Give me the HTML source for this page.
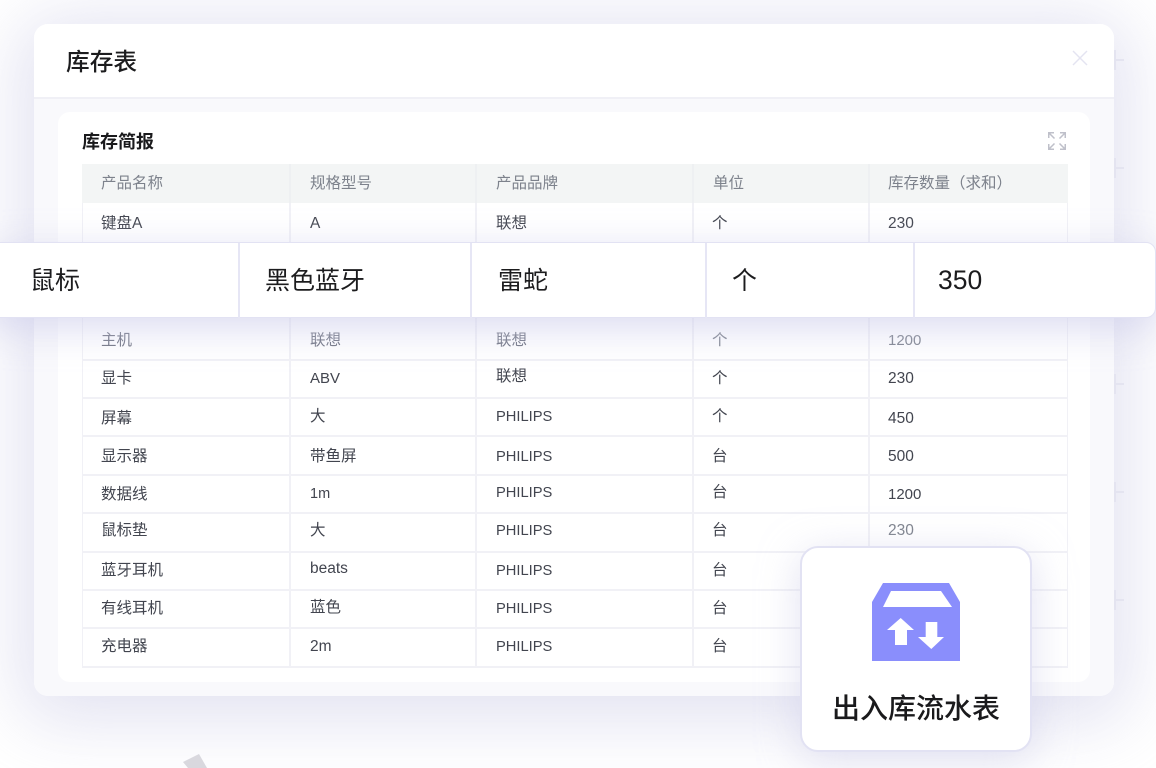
<!DOCTYPE html>
<html lang="zh"><head><meta charset="utf-8"><title>库存表</title>
<style>
html,body{margin:0;padding:0;width:1156px;height:768px;overflow:hidden;background:#fff}
body{position:relative;font-family:"Liberation Sans","Noto Sans CJK SC",sans-serif;color:#3c3f4a}
div,span.a{position:absolute}
.t{font-size:15.500px;line-height:20px;white-space:nowrap;color:#42454f;margin-top:1px}
.p{font-size:14.700px}
.h{color:#7d828c}
.hl{background:#f1f1f6;height:2px;left:82px;width:986px}
.vl{background:#f1f1f6;width:2px;top:203px;height:464px}
.f{font-size:25px;line-height:34px;top:264px;color:#1c1c1e;white-space:nowrap}
.fv{position:absolute;top:243px;width:1.500px;height:75px;background:#e6e6f5}
.tick{width:2px;height:20px;background:#e4e4f0;left:1114px}
.tick2{width:10px;height:2px;background:#e4e4f0;left:1114px}
</style></head><body>
<div style="left:34px;top:24px;width:1080px;height:672px;border-radius:14px;box-shadow:0 10px 70px 14px rgba(208,208,232,.62)"></div>
<div style="left:34px;top:24px;width:1080px;height:672px;border-radius:14px;background:#f9f9fc;overflow:hidden">
  <div style="left:0;top:0;width:1080px;height:73px;background:#fff;border-bottom:2px solid #f0f0f6"></div>
</div>
<div style="left:66px;top:46px;font-size:23.700px;line-height:34px;font-weight:500;color:#1c1c1e;white-space:nowrap">库存表</div>
<svg style="position:absolute;left:1071px;top:49px" width="18" height="18" viewBox="0 0 18 18"><path d="M2 2L16 16M16 2L2 16" stroke="#e4e4f1" stroke-width="1.500" fill="none"/></svg>

<div style="left:58px;top:112px;width:1032px;height:570px;background:#fff;border-radius:12px"></div>
<div style="left:82px;top:130px;font-size:18px;line-height:24px;font-weight:700;color:#1a1a1c;white-space:nowrap">库存简报</div>
<svg style="position:absolute;left:1047px;top:131px" width="20" height="20" viewBox="0 0 20 20" fill="none" stroke="#bfc0ca" stroke-width="1.500"><path d="M1.750 7V1.750H7M1.750 1.750L7.500 7.500"/><path d="M18.250 7V1.750H13M18.250 1.750L12.500 7.500"/><path d="M1.750 13V18.250H7M1.750 18.250L7.500 12.500"/><path d="M18.250 13V18.250H13M18.250 18.250L12.500 12.500"/></svg>

<div style="left:82px;top:164px;width:986px;height:39px;background:#f3f5f5"></div>
<div style="left:289px;top:164px;width:2px;height:39px;background:#eef0f2"></div>
<div style="left:475px;top:164px;width:2px;height:39px;background:#eef0f2"></div>
<div style="left:692px;top:164px;width:2px;height:39px;background:#eef0f2"></div>
<div style="left:868px;top:164px;width:2px;height:39px;background:#eef0f2"></div>

<div class="vl" style="left:82px;width:1px"></div><div class="vl" style="left:289px"></div><div class="vl" style="left:475px"></div><div class="vl" style="left:692px"></div><div class="vl" style="left:868px"></div><div class="vl" style="left:1067px;width:1px"></div>
<div class="hl" style="top:359px"></div><div class="hl" style="top:397px"></div><div class="hl" style="top:435px"></div><div class="hl" style="top:474px"></div><div class="hl" style="top:512px"></div><div class="hl" style="top:551px"></div><div class="hl" style="top:589px"></div><div class="hl" style="top:627px"></div><div class="hl" style="top:666px"></div>

<div class="t h" style="left:101px;top:173px">产品名称</div><div class="t h" style="left:310px;top:173px">规格型号</div><div class="t h" style="left:496px;top:173px">产品品牌</div><div class="t h" style="left:713px;top:173px">单位</div><div class="t h" style="left:888px;top:173px">库存数量（求和）</div>
<div class="t" style="left:101px;top:213px">键盘A</div><div class="t" style="left:310px;top:213px">A</div><div class="t" style="left:496px;top:213px">联想</div><div class="t" style="left:712px;top:213px">个</div><div class="t" style="left:888px;top:213px">230</div>

<div class="t h" style="left:101px;top:330px;color:#6f7380">主机</div><div class="t h" style="left:310px;top:330px;color:#6f7380">联想</div><div class="t h" style="left:496px;top:330px;color:#6f7380">联想</div><div class="t h" style="left:712px;top:330px;color:#7d828c">个</div><div class="t h" style="left:888px;top:330px;font-size:15px">1200</div>
<div class="t" style="left:101px;top:368px">显卡</div><div class="t" style="left:310px;top:368px;font-size:15px">ABV</div><div class="t" style="left:496px;top:366px">联想</div><div class="t" style="left:712px;top:368px">个</div><div class="t" style="left:888px;top:368px">230</div>
<div class="t" style="left:101px;top:408px">屏幕</div><div class="t" style="left:310px;top:406px">大</div><div class="t p" style="left:496px;top:406px">PHILIPS</div><div class="t" style="left:712px;top:406px">个</div><div class="t" style="left:888px;top:408px">450</div>
<div class="t" style="left:101px;top:446px">显示器</div><div class="t" style="left:310px;top:446px">带鱼屏</div><div class="t p" style="left:496px;top:446px">PHILIPS</div><div class="t" style="left:712px;top:446px">台</div><div class="t" style="left:888px;top:446px">500</div>
<div class="t" style="left:101px;top:484px">数据线</div><div class="t" style="left:310px;top:483px;font-size:14.500px">1m</div><div class="t p" style="left:496px;top:482px">PHILIPS</div><div class="t" style="left:712px;top:482px">台</div><div class="t" style="left:888px;top:484px;font-size:15px">1200</div>
<div class="t" style="left:101px;top:520px">鼠标垫</div><div class="t" style="left:310px;top:520px">大</div><div class="t p" style="left:496px;top:520px">PHILIPS</div><div class="t" style="left:712px;top:520px">台</div><div class="t h" style="left:888px;top:520px">230</div>
<div class="t" style="left:101px;top:560px">蓝牙耳机</div><div class="t" style="left:310px;top:558px">beats</div><div class="t p" style="left:496px;top:560px">PHILIPS</div><div class="t" style="left:712px;top:560px">台</div>
<div class="t" style="left:101px;top:598px">有线耳机</div><div class="t" style="left:310px;top:597px">蓝色</div><div class="t p" style="left:496px;top:598px">PHILIPS</div><div class="t" style="left:712px;top:598px">台</div>
<div class="t" style="left:101px;top:636px">充电器</div><div class="t" style="left:310px;top:636px">2m</div><div class="t p" style="left:496px;top:636px">PHILIPS</div><div class="t" style="left:712px;top:636px">台</div>

<div class="tick" style="top:50px"></div><div class="tick2" style="top:59px"></div>
<div class="tick" style="top:158px"></div><div class="tick2" style="top:167px"></div>
<div class="tick" style="top:374px"></div><div class="tick2" style="top:383px"></div>
<div class="tick" style="top:482px"></div><div class="tick2" style="top:491px"></div>
<div class="tick" style="top:590px"></div><div class="tick2" style="top:599px"></div>

<div style="left:-12px;top:242px;width:1164px;height:74px;background:#fff;border:1.500px solid #e2e2f3;border-radius:10px;box-shadow:0 10px 40px rgba(205,205,235,.75);width:1165.500px"></div>
<div class="fv" style="left:238px"></div><div class="fv" style="left:470px"></div><div class="fv" style="left:705px"></div><div class="fv" style="left:913px"></div>
<div class="f" style="left:30px">鼠标</div><div class="f" style="left:265px">黑色蓝牙</div><div class="f" style="left:498px">雷蛇</div><div class="f" style="left:732px">个</div><div class="f" style="left:938px;top:263px;font-size:26.500px">350</div>

<svg style="position:absolute;left:180px;top:750px" width="30" height="18" viewBox="0 0 30 18"><path d="M3 12L19 4L27 18H8Z" fill="#d9d8de"/></svg>

<div style="left:800px;top:546px;width:228px;height:202px;background:#fff;border:2px solid #e2e2f3;border-radius:18px;box-shadow:0 8px 40px rgba(205,205,232,.6)"></div>
<svg style="position:absolute;left:872px;top:583px" width="88" height="78" viewBox="0 0 88 78"><path d="M11 0H77L88 19V78H0V19Z" fill="#8a8efc"/><path d="M19 8H69L80 24H11Z" fill="#fff"/><path d="M28.700 35L42 47H35V62H23V47H15Z" fill="#fff"/><path d="M53.700 39H65.300V54H72L59.300 66L46 54H53.700Z" fill="#fff"/></svg>
<div style="left:800px;top:690px;width:232px;text-align:center;font-size:28px;line-height:38px;font-weight:500;color:#1a1a1c;white-space:nowrap">出入库流水表</div>
</body></html>
